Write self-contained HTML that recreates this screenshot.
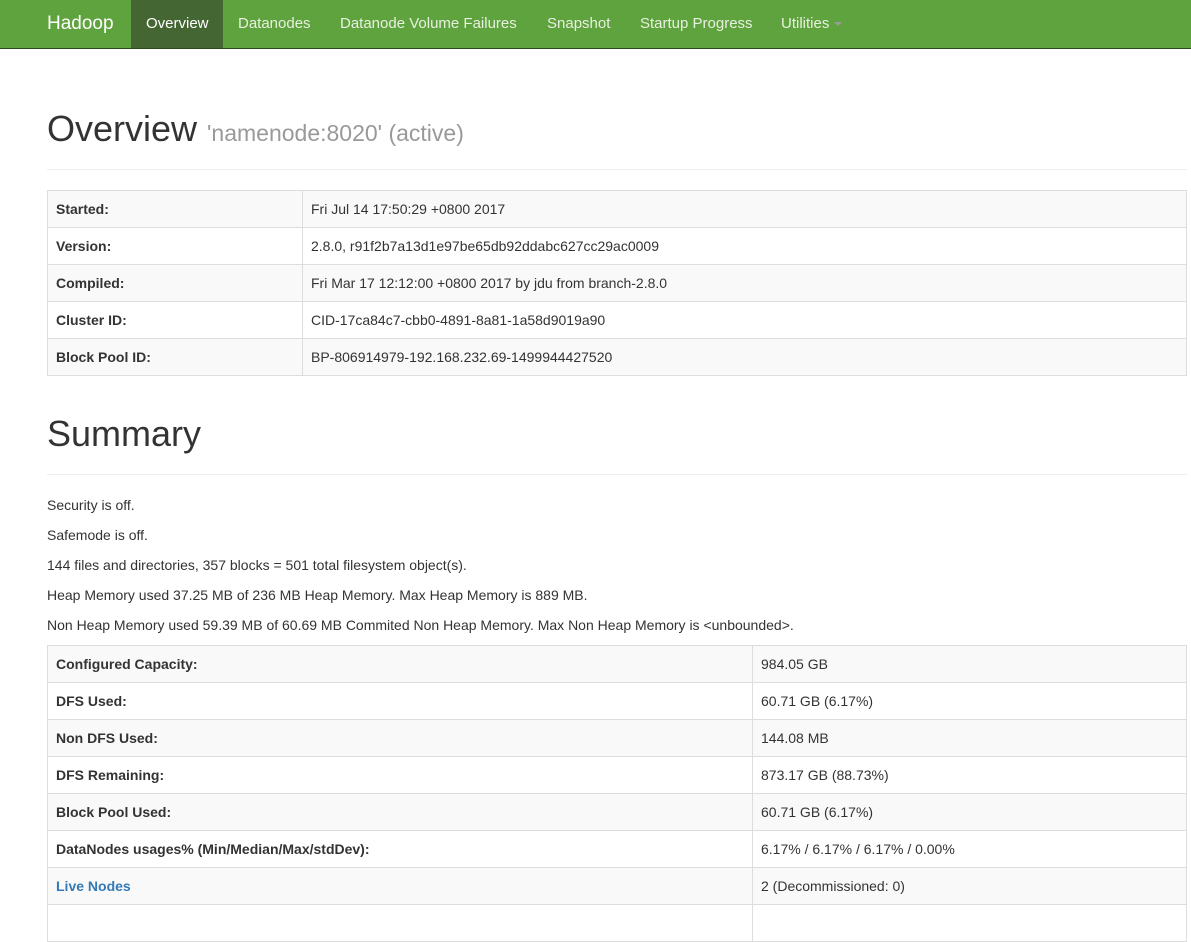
<!DOCTYPE html>
<html><head><style>
body{margin:0;font-family:"Liberation Sans",sans-serif;font-size:14px;color:#333;background:#fff;width:1191px;height:907px;overflow:hidden}
.nav{position:absolute;left:0;top:0;width:1191px;height:48px;background:#5fa33e;border-bottom:1px solid #2d4a1f}
.nav a{position:absolute;top:0;height:48px;line-height:48px;color:#e8f0e0;text-decoration:none;font-size:15px}
.brand{font-size:19px!important;color:#fff!important}
.act{background:#446633;color:#fff!important;padding:0 15px}
h1{position:absolute;left:47px;margin:0;font-weight:normal;font-size:36px;color:#333}
h1 small{font-size:23px;color:#999}
hr{position:absolute;left:47px;width:1140px;margin:0;border:0;border-top:1px solid #eee}
table{position:absolute;left:47px;width:1140px;border-collapse:collapse}
td{border:1px solid #ddd;height:36px;padding:0 8px;font-size:14px}
tr:nth-child(odd) td{background:#f9f9f9}
td:first-child{font-weight:bold}
p{position:absolute;left:47px;margin:0;line-height:20px}
a.l{color:#337ab7;text-decoration:none}
</style></head><body>
<div class="nav">
<a class="brand" style="left:47px">Hadoop</a>
<a class="act" style="left:131px;width:62px">Overview</a>
<a style="left:238px">Datanodes</a>
<a style="left:340px">Datanode Volume Failures</a>
<a style="left:547px">Snapshot</a>
<a style="left:640px">Startup Progress</a>
<a style="left:781px">Utilities <span style="display:inline-block;border-top:4px solid #9a9a9a;border-left:4px solid transparent;border-right:4px solid transparent;vertical-align:middle"></span></a>
</div>
<h1 style="top:108px">Overview <small>'namenode:8020' (active)</small></h1>
<hr style="top:169px">
<table style="top:190px">
<tr><td style="width:238px">Started:</td><td>Fri Jul 14 17:50:29 +0800 2017</td></tr>
<tr><td>Version:</td><td>2.8.0, r91f2b7a13d1e97be65db92ddabc627cc29ac0009</td></tr>
<tr><td>Compiled:</td><td>Fri Mar 17 12:12:00 +0800 2017 by jdu from branch-2.8.0</td></tr>
<tr><td>Cluster ID:</td><td>CID-17ca84c7-cbb0-4891-8a81-1a58d9019a90</td></tr>
<tr><td>Block Pool ID:</td><td>BP-806914979-192.168.232.69-1499944427520</td></tr>
</table>
<h1 style="top:413px">Summary</h1>
<hr style="top:474px">
<p style="top:495px">Security is off.</p>
<p style="top:525px">Safemode is off.</p>
<p style="top:555px">144 files and directories, 357 blocks = 501 total filesystem object(s).</p>
<p style="top:585px">Heap Memory used 37.25 MB of 236 MB Heap Memory. Max Heap Memory is 889 MB.</p>
<p style="top:615px">Non Heap Memory used 59.39 MB of 60.69 MB Commited Non Heap Memory. Max Non Heap Memory is &lt;unbounded&gt;.</p>
<table style="top:645px">
<tr><td style="width:688px">Configured Capacity:</td><td>984.05 GB</td></tr>
<tr><td>DFS Used:</td><td>60.71 GB (6.17%)</td></tr>
<tr><td>Non DFS Used:</td><td>144.08 MB</td></tr>
<tr><td>DFS Remaining:</td><td>873.17 GB (88.73%)</td></tr>
<tr><td>Block Pool Used:</td><td>60.71 GB (6.17%)</td></tr>
<tr><td>DataNodes usages% (Min/Median/Max/stdDev):</td><td>6.17% / 6.17% / 6.17% / 0.00%</td></tr>
<tr><td><a class="l">Live Nodes</a></td><td>2 (Decommissioned: 0)</td></tr>
<tr><td>&nbsp;</td><td></td></tr>
</table>
</body></html>
